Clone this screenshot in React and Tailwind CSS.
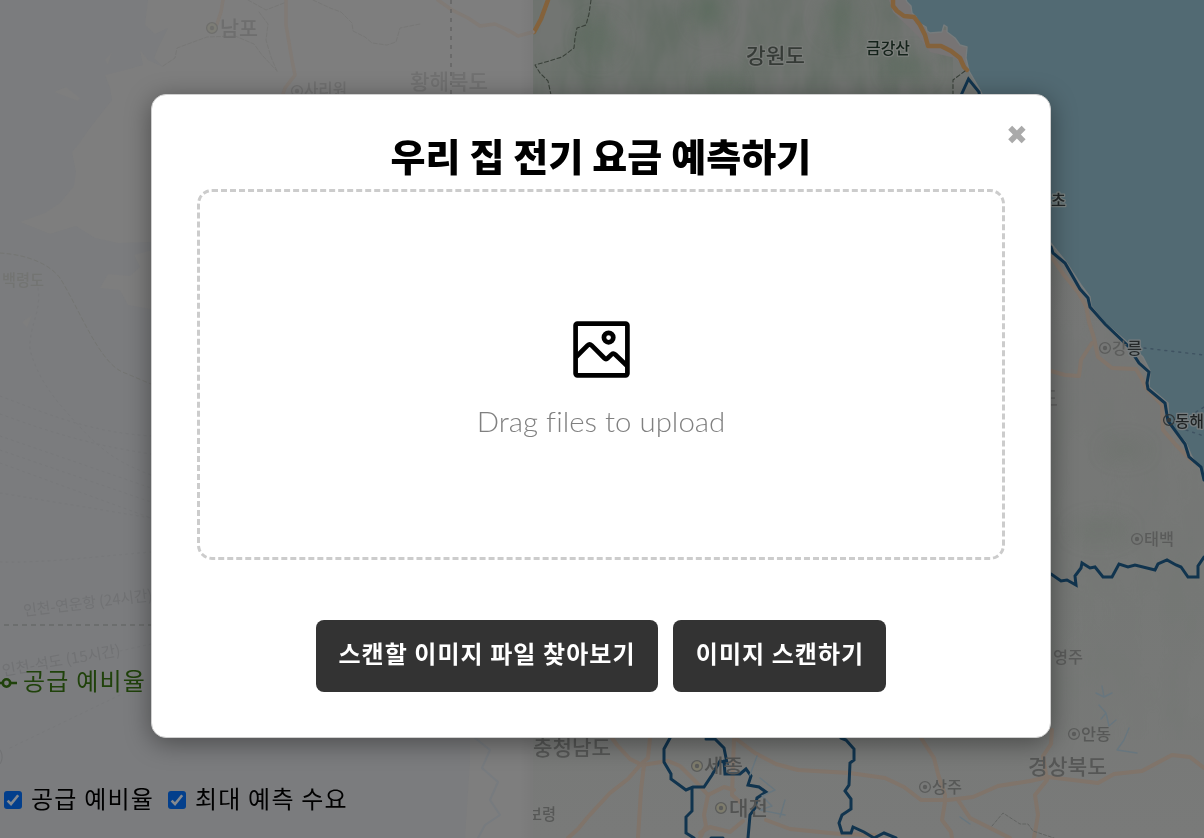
import React from "react";

const ROAD = "#80746a";
const BORDER = "#11344e";

function CityDot({ x, y, fill = "none", color = "#5c5d5c" }) {
  return (
    <g>
      <circle cx={x} cy={y} r="5.4" fill={fill} stroke={color} strokeWidth="1.3" />
      <circle cx={x} cy={y} r="2.2" fill={color} />
    </g>
  );
}

function Label({ x, y, size, width, color, halo, children, rotate }) {
  return (
    <text
      x={x}
      y={y}
      fontSize={size}
      textLength={width}
      lengthAdjust="spacingAndGlyphs"
      fill={color}
      stroke={halo || "none"}
      strokeWidth={halo ? 2.5 : 0}
      paintOrder="stroke"
      strokeLinejoin="round"
      transform={rotate ? `rotate(${rotate} ${x} ${y})` : undefined}
    >
      {children}
    </text>
  );
}

function MapBackground() {
  return (
    <svg
      className="absolute inset-0 h-[838px] w-[1204px] font-['Noto_Sans_CJK_KR',sans-serif] font-medium"
      viewBox="0 0 1204 838"
      fill="none"
      strokeLinejoin="round"
      strokeLinecap="round"
      aria-hidden="true"
    >
      <defs>
        <linearGradient id="terrain" x1="0" y1="0" x2="0" y2="838" gradientUnits="userSpaceOnUse">
          <stop offset="0" stopColor="#727572" />
          <stop offset="0.14" stopColor="#727572" />
          <stop offset="0.4" stopColor="#767776" />
          <stop offset="0.7" stopColor="#767876" />
          <stop offset="1" stopColor="#797a79" />
        </linearGradient>
        <filter id="relief" x="0" y="0" width="1" height="1" colorInterpolationFilters="sRGB">
          <feTurbulence type="fractalNoise" baseFrequency="0.03 0.011" numOctaves="4" seed="8" />
          <feColorMatrix values="0 0 0 0 0.34  0 0 0 0 0.40  0 0 0 0 0.35  2.2 0 0 0 -0.75" />
        </filter>
        <filter id="soft" x="-0.5" y="-0.5" width="2" height="2" colorInterpolationFilters="sRGB">
          <feGaussianBlur stdDeviation="9" />
        </filter>
        <linearGradient id="edge" x1="520" y1="0" x2="534" y2="0" gradientUnits="userSpaceOnUse">
          <stop offset="0" stopColor="#000" stopOpacity="0" />
          <stop offset="1" stopColor="#000" stopOpacity="0.04" />
        </linearGradient>
      </defs>

      {/* terrain */}
      <rect width="1204" height="838" fill="url(#terrain)" />
      <rect x="533" y="0" width="420" height="100" filter="url(#relief)" opacity="0.45" />
      <rect x="1045" y="230" width="159" height="510" filter="url(#relief)" opacity="0.05" />
      <g filter="url(#soft)" fill="#57695a">
        <ellipse cx="708" cy="12" rx="14" ry="20" opacity="0.7" />
        <ellipse cx="720" cy="85" rx="16" ry="14" opacity="0.6" />
        <ellipse cx="908" cy="68" rx="20" ry="12" opacity="0.65" />
        <ellipse cx="600" cy="40" rx="18" ry="20" opacity="0.35" />
        <ellipse cx="840" cy="20" rx="20" ry="20" opacity="0.35" />
        <ellipse cx="1125" cy="450" rx="22" ry="10" opacity="0.18" />
        <ellipse cx="1100" cy="530" rx="30" ry="12" opacity="0.18" />
      </g>
      <path d="M889 0 L912 0 L926 30 L950 30 L968 50 L967 72 L955 58 L930 52 L918 36 L893 12 Z" fill="#777474" />

      {/* east sea */}
      <path
        d="M904 -5 L907 2 L911 6 L912 13 L916 17 L919 23 L926 27 L927 31 L930 33 L942 32 L944 25 L947 27 L947 32 L955 38 L960 45 L967 47 L966 58 L969 71 L980 90 L1050 242 L1066 262 L1081 285 L1090 297 L1091 306 L1105 323 L1127 342 L1143 357 L1150 371 L1149 387 L1168 403 L1169 423 L1186 443 L1192 457 L1210 485 L1210 -5 Z"
        fill="#526a73"
        stroke="#777c7d"
        strokeWidth="1.4"
      />
      <path d="M1144 348 L1204 355 M1186 430 L1204 436 M1196 412 L1204 407" stroke="#3f5261" strokeDasharray="2 5" strokeWidth="1.4" />

      {/* east coast roads */}
      <path
        d="M893 0 L893 6 L897 11 L904 16 L914 17 L920 25 L925 35 L928 46 L941 46 L951 51 L960 58 L964 67 L967 70 M548 0 L541 19 L534 32"
        stroke="#84623b"
        strokeWidth="4.5"
      />
      <g stroke={ROAD} strokeWidth="4">
        <path d="M1051 256 L1064 275 L1078 292 L1086 306 L1089 322 L1094 338 L1098 357 L1112 368 L1136 369 L1142 379 L1146 388 L1162 405 L1163 430 L1176 445 L1192 461" />
        <path d="M1051 371 L1065 375 L1079 376 L1081 360 L1092 343" />
        <path d="M612 738 L617 745 L630 759 L642 765 L668 761 L680 766 L692 778 L697 783 L708 795 L704 815 L706 826 L700 838" />
        <path d="M650 738 L648 758 L641 764 L628 779 L610 793 L598 806 L587 818 L578 829 L568 838 M644 765 L641 790 L638 838" />
        <path d="M735 738 L755 753 L776 764 L798 770 L850 773 L885 778 L904 787 L921 800 L948 800 L973 797 L998 786 L1030 781 L1048 777 L1098 783 L1114 774 L1142 771 L1172 755 L1190 757 L1204 768" />
        <path d="M734 738 L732 795 L740 802 M708 795 L724 787 L734 790 M700 833 L710 827 L730 832 L743 821 M766 820 L790 829 L840 834 L875 835" />
        <path d="M921 738 L934 758 L938 774 L945 795 L945 802 L942 820 L951 832 L952 838 M958 800 L970 818 L990 828 L1010 838" />
        <path d="M1052 730 L1051 744 L1043 756 L1047 780 L1035 795 L1038 815 L1034 838" />
      </g>

      {/* province boundaries */}
      <path
        d="M591 0 L589 14 L586 25 L577 28 L575 38 L574 48 L562 57 L549 61 L535 65 L540 73 L548 81 L551 95 M965 71 L953 80 L953 96"
        stroke="#394039"
        strokeWidth="1.1"
        strokeDasharray="4 2.5"
      />
      <path d="M992 826 L1003 813 L1020 824 L1028 824 L1033 831 L1054 838" stroke="#626462" strokeDasharray="3 2" />
      <g stroke={BORDER} strokeWidth="3" strokeLinejoin="miter">
        <path d="M958 102 L968.5 79 L979 92 L980 100" />
        <path d="M1051 247 L1053 253 L1065 263 L1080 289 L1088 298 L1090 307 L1105 324 L1128 346 L1139 363 L1149 372 L1147 383 L1148 389 L1165 403 L1168 421 L1185 444 L1189 457 L1201 467 L1204 480" />
        <path d="M1051 574 L1061 581 L1067 580 L1076 585 L1075 576 L1081 568 L1082 563 L1090 568 L1095 567 L1103 577 L1112 577 L1119 564 L1128 567 L1135 565 L1155 570 L1158 564 L1167 560 L1176 565 L1181 567 L1188 577 L1198 577 L1198 566 L1204 557" />
        <path d="M670 738 L664 749 L664 762 L671 774 L671 779 L686 790 L693 787 L704 787 L712 775 L720 761 L727 763 L724 748 L715 739 L706 739" />
        <path d="M724 761 L725 774 L740 774 L746 769 L751 776 L748 785 L759 787 L766 792 L757 798 L755 808 L750 815 L748 838 M692 788 L692 811 L686 817 L686 833 L694 838" />
        <path d="M841 738 L846 740 L854 749 L854 760 L850 763 L849 785 L845 791 L851 799 L851 809 L842 815 L839 823 L842 833 L851 833 L853 827 L864 832 L874 838 L884 833 L896 838 M711 838 H723" />
      </g>
      <path
        d="M1102 686 L1104 697 L1096 693 M1104 697 L1112 693 M1099 705 L1106 713 L1101 719 M1106 713 L1109 726 L1116 720 M1129 728 L1124 740 L1117 750 L1137 753 M960 817 L970 824 M757 756 L750 775 M760 778 L775 790 L762 796 L772 806 L760 810 L785 815 M785 800 L780 817"
        stroke="#68767e"
        strokeWidth="1.4"
      />

      {/* east labels */}
      <Label x={746} y={63} size={21} width={59} color="#363b37" halo="#777a77">강원도</Label>
      <Label x={866} y={54} size={16} width={44} color="#14221a" halo="#7a7d7a">금강산</Label>
      <Label x={1051} y={206} size={16} width={15} color="#222728" halo="#78807f">초</Label>
      <CityDot x={1105} y={348} />
      <Label x={1112} y={354} size={16} width={15} color="#5c5d5c">강</Label>
      <Label x={1127} y={354} size={16} width={15} color="#262a2b" halo="#777d7f">릉</Label>
      <CityDot x={1169} y={420} color="#333738" />
      <Label x={1175} y={427} size={16} width={29} color="#202425" halo="#777d7f">동해</Label>
      <Label x={1038} y={406} size={20} width={20} color="#636463">도</Label>
      <CityDot x={1137} y={539} />
      <Label x={1144} y={545} size={16} width={30} color="#5a5b5a">태백</Label>
      <Label x={1053} y={663} size={16} width={30} color="#5a5b5a">영주</Label>
      <CityDot x={1074} y={734} />
      <Label x={1081} y={740} size={16} width={30} color="#575857">안동</Label>
      <Label x={1028} y={774} size={21} width={79} color="#565756">경상북도</Label>
      <CityDot x={925} y={787} />
      <Label x={932} y={793} size={16} width={30} color="#575857">상주</Label>
      <Label x={533} y={755} size={21} width={78} color="#565756">충청남도</Label>
      <Label x={528} y={820} size={16} width={28} color="#575857">보령</Label>
      <CityDot x={697} y={766} fill="#7e7c6c" />
      <Label x={704} y={773} size={19} width={39} color="#525352">세종</Label>
      <CityDot x={721} y={808} fill="#7e7c6c" />
      <Label x={729} y={816} size={20} width={39} color="#525352">대전</Label>

      {/* west, under the translucent chart panel */}
      <rect width="533" height="838" fill="#7b7c7e" />
      <path
        d="M148 0 L145 25 L155 34 L168 28 L158 48 L154 58 L163 67 L148 60 L140 50 L143 65 L125 70 L105 75 L110 88 L112 100 L100 115 L90 128 L78 145 L72 152 L76 172 L74 186 L60 203 L45 213 L20 222 L50 234 L76 226 L95 238 L118 243 L150 242 L533 242 L533 838 L465 838 L470 760 L470 620 L200 620 L200 300 L150 309 L128 305 L120 290 L100 288 L108 274 L130 276 L140 267 L134 255 L160 248 L533 240 L533 0 Z"
        fill="#7e7e7e"
      />
      <path d="M54 92 L66 87 L80 98 L78 101 Z M105 60 L112 52 L108 65 Z M22 322 L32 315 L27 328 Z" fill="#7e7e7e" />
      <g stroke="#807a75" strokeWidth="3.5">
        <path d="M223 0 L221 12 L217 24 M286 0 L286 25 L292 60 L295 75 L285 88 L281 100 M438 0 L452 10 L468 18 L480 26 L495 24 L508 30 L518 36 L533 32" />
      </g>
      <path
        d="M163 66 L175 58 L177 48 L207 37 L235 36 L254 44 L262 55 L277 71 M248 0 L266 10 L284 3 M259 12 L268 24 L266 40 L271 57 L277 71 M313 0 L330 8 L341 12 L352 23 L353 31 L365 37 L372 43 L387 45 L396 42 L400 28 L420 24"
        stroke="#777776"
        strokeDasharray="4 2"
      />
      <path d="M0 253 C30 255 50 265 60 278 C80 310 100 365 125 373 L151 384" stroke="#747572" strokeDasharray="4 3" />
      <path
        d="M38 288 C42 310 28 330 30 350 C40 385 60 405 80 427 C105 455 125 465 151 475 M0 396 C50 415 90 432 151 436 M0 414 C50 432 90 445 151 454 M0 436 L151 488 M0 450 L151 502 M0 463 L151 518 M0 493 L151 518 M0 562 C50 563 100 556 151 552 M120 651 L151 644 M10 748 L120 695"
        stroke="#77787a"
        strokeDasharray="2 4"
      />
      <path d="M475 738 L490 750 L482 768 L498 782 L490 800 L500 815 L485 825 L478 838" stroke="#777b7f" strokeWidth="2" />
      <path d="M451 0 V100" stroke="#646464" strokeWidth="1.5" strokeDasharray="4 5" strokeLinecap="butt" />
      <path d="M4 625 H151" stroke="#68696a" strokeWidth="1.5" strokeDasharray="5 4" strokeLinecap="butt" />
      <rect x="520" width="13" height="838" fill="url(#edge)" />

      <CityDot x={212} y={28} color="#6f6f6d" fill="#7d7d76" />
      <Label x={220} y={36} size={21} width={38} color="#6e6e6e">남포</Label>
      <CityDot x={297} y={91} color="#707070" />
      <Label x={304} y={96} size={17} width={43} color="#707070">사리원</Label>
      <Label x={410} y={89} size={21} width={78} color="#717171">황해북도</Label>
      <Label x={2} y={286} size={16} width={42} color="#737472">백령도</Label>
      <g className="font-normal">
        <Label x={24} y={616} size={15} width={130} color="#717274" rotate={-7}>인천-연운항 (24시간)</Label>
        <Label x={3} y={676} size={15} width={120} color="#717274" rotate={-10}>인천-석도 (15시간)</Label>
        <Label x={-1} y={761} size={14} width={5} color="#717274">)</Label>
      </g>
    </svg>
  );
}

function CheckItem({ children }) {
  return (
    <label className="flex items-center">
      <svg className="h-[18px] w-[18px]" viewBox="0 0 18 18">
        <rect width="18" height="18" rx="3" fill="#033f8c" />
        <path d="M3.6 9.6 L7 13 L14.2 4.2" fill="none" stroke="#84898f" strokeWidth="2.6" />
      </svg>
      <span className="ml-[9px] pb-[5px] whitespace-nowrap">{children}</span>
    </label>
  );
}

function ChartLegend() {
  return (
    <div className="relative flex h-full flex-col pt-[665px] font-['Noto_Sans_CJK_KR',sans-serif] text-[24px] leading-9 tracking-[1.2px]">
      <div className="flex h-9 items-center text-[#20420b]">
        <svg className="h-[10px] w-[17px]" viewBox="0 0 17 10" fill="none" stroke="currentColor" strokeWidth="2.6">
          <path d="M0 5 H2.5 M10.5 5 H17" />
          <circle cx="6.5" cy="5" r="3.7" />
        </svg>
        <span className="ml-[6px] pb-[6px]">공급 예비율</span>
      </div>
      <div className="mt-[79px] flex h-10 items-center gap-[14px] pl-1 text-black">
        <CheckItem>공급 예비율</CheckItem>
        <CheckItem>최대 예측 수요</CheckItem>
      </div>
    </div>
  );
}

function ImageIcon() {
  return (
    <svg className="h-[57px] w-[57px]" viewBox="0 0 57 57" fill="none" stroke="#000" strokeWidth="4.7" strokeLinejoin="round">
      <rect x="2.6" y="2.6" width="51.8" height="51.8" rx="1.8" />
      <circle cx="35.6" cy="16.6" r="4.7" />
      <path d="M3 36 L14.6 24.4 Q16.6 22.4 18.6 24.4 L31.2 37 Q33 38.8 34.8 37 L38.6 33.4 Q40.4 31.8 42.2 33.5 L54.5 45.2" />
    </svg>
  );
}

function UploadModal() {
  return (
    <section className="relative flex h-[644px] w-[900px] flex-col items-center rounded-[15px] border border-[#d0d0d0] bg-white px-[45px] pt-[32px] font-['Noto_Sans_CJK_KR',sans-serif] shadow-[0_5px_26px_rgba(0,0,0,0.4)]">
      <button className="absolute top-[25px] right-[22px] h-[30px] w-[22px] font-['DejaVu_Sans',sans-serif] text-[26px] leading-[30px] font-bold text-[#aaa]">
        ✖
      </button>
      <h2 className="h-[62px] text-[38px] leading-[56px] font-black tracking-[0.1px] whitespace-nowrap text-black">우리 집 전기 요금 예측하기</h2>
      <div className="flex h-[371px] w-[808px] flex-col items-center rounded-[15px] border-[3px] border-dashed border-[#ccc] pt-[129px]">
        <ImageIcon />
        <p className="mt-[24px] scale-x-[1.09] font-['Lato',sans-serif] text-[27px] leading-10 font-light whitespace-nowrap text-[#808080] [font-variant-ligatures:none]">
          Drag files to upload
        </p>
      </div>
      <div className="mt-[60px] flex gap-[15px] text-[24px] font-bold tracking-[1.05px] whitespace-nowrap text-white">
        <button className="h-[72px] w-[342px] rounded-lg bg-[#333] pb-[6px]">스캔할 이미지 파일 찾아보기</button>
        <button className="h-[72px] w-[213px] rounded-lg bg-[#333] pb-[6px] pl-px">이미지 스캔하기</button>
      </div>
    </section>
  );
}

export default function App() {
  return (
    <main className="relative h-[838px] w-[1204px] overflow-hidden bg-[#7b7c7e]">
      <MapBackground />
      <ChartLegend />
      <div className="absolute inset-0 flex items-start pt-[94px] pl-[151px]">
        <UploadModal />
      </div>
    </main>
  );
}
